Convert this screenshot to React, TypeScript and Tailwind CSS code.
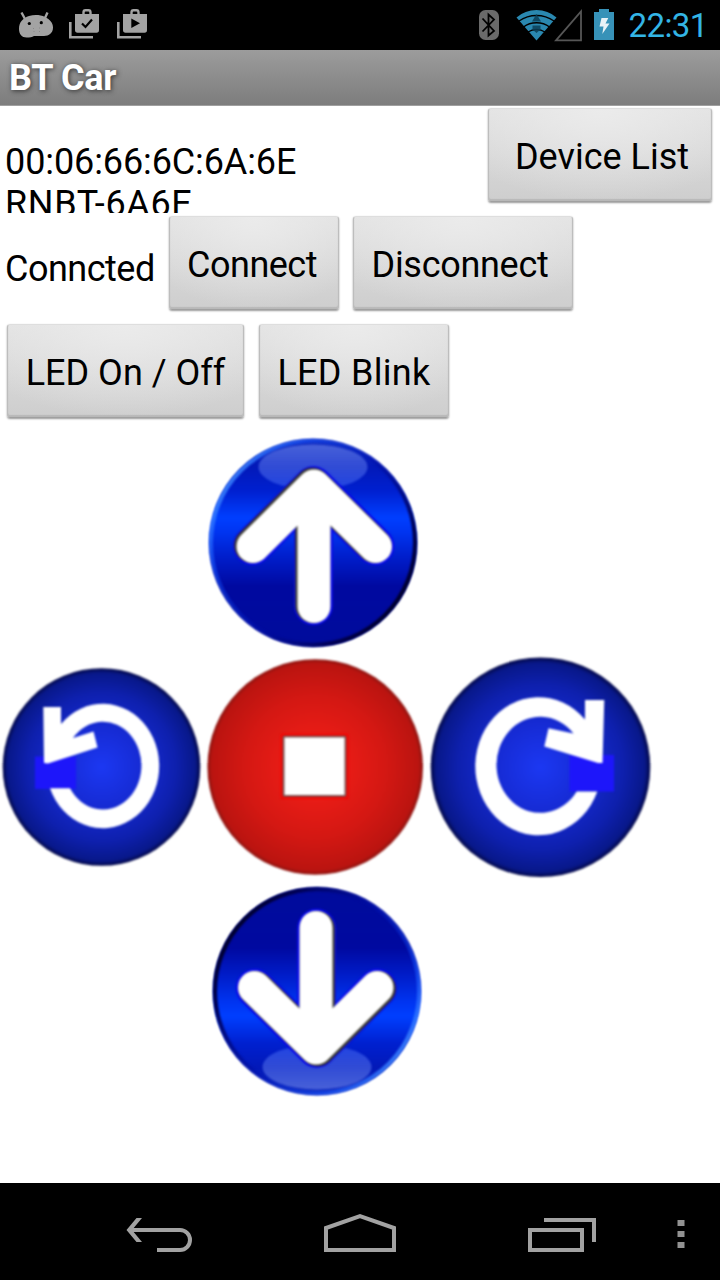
import React from "react";

function AndroidIcon() {
  return (
    <svg className="h-[50px] w-[40px]" viewBox="16 0 40 50">
      <path d="M21.500 12.500L25 19M47.500 12.500L44.500 19" stroke="#a3a3a3" strokeWidth="2.400" strokeLinecap="butt" />
      <path d="M19 29C19 22 23 18 29 16C34 14.500 40 14.500 45 17C50 19.500 53 23 53 27.500C53 33 49 36 44 36H34C32 37 30 37.500 26.500 37.500C22 37.500 19 34 19 29Z" fill="#a3a3a3" />
      <circle cx="29.300" cy="23.500" r="1.600" fill="#000" />
      <circle cx="41.300" cy="22.700" r="1.600" fill="#000" />
      <path d="M33 28.500h1M39 28h1M33.500 31.500h1M39 31.500h1" stroke="#888" strokeWidth="1" />
    </svg>
  );
}

function BagIcon({ kind }: { kind: "check" | "play" }) {
  return (
    <svg className="h-[50px] w-[48px]" viewBox="60 0 48 50">
      <path d="M70.300 22V37.300H93" fill="none" stroke="#a3a3a3" strokeWidth="2.600" />
      <path d="M83.500 15V12.500Q83.500 10.300 85.500 10.300H88.500Q90.500 10.300 90.500 12.500V15" fill="none" stroke="#a3a3a3" strokeWidth="2.400" />
      <path d="M75 14H99V30Q99 32.700 96.500 32.700H77.500Q75 32.700 75 30Z" fill="#a3a3a3" />
      {kind === "check" ? (
        <path d="M82 23.500L85.500 27L92 19.500" fill="none" stroke="#000" strokeWidth="2.200" />
      ) : (
        <path d="M83.300 18.500V28L92 23.300Z" fill="#000" />
      )}
    </svg>
  );
}

function StatusBar() {
  return (
    <header className="flex h-[50px] items-center bg-black">
      <div className="flex w-[476px] pl-4">
        <AndroidIcon />
        <div className="flex pl-1">
          <BagIcon kind="check" />
          <BagIcon kind="play" />
        </div>
      </div>
      <svg className="h-[50px] w-[30px]" viewBox="476 0 30 50">
        <rect x="479" y="10" width="20" height="30" rx="6.500" fill="#6a6a6a" />
        <path d="M482.500 18.500L494 31L488.500 35.500V14.500L494 19.500L482.500 31.500" fill="none" stroke="#000" strokeWidth="1.800" />
      </svg>
      <svg className="h-[50px] w-[112px]" viewBox="506 0 112 50">
        <path d="M516.500 17.500Q525 10 536.500 10T556.500 17.500L536.500 40.500Z" fill="#2a88b0" />
        <path d="M519 21Q527 15.500 536.500 15.500T554 21M523.500 27Q529 22.800 536.500 22.800T549.500 27M528 32Q532 29.500 536.500 29.500T545 32" fill="none" stroke="#000" strokeWidth="1.400" />
        <path d="M536.500 14L541 21.500H532ZM532.500 25.500H540.500V29.500L536.500 33L532.500 29.500Z" fill="#0b4058" opacity=".85" />
        <path d="M556 40.300L581 11.500V40.300Z" fill="none" stroke="#565656" strokeWidth="1.800" />
        <path d="M594 12H599V9H609V12H614V40H594Z" fill="#3792b8" />
        <path d="M601.500 18H608.300L605.500 23.500H609.500L602.300 34L603.500 26.500H599.500Z" fill="#e8f2f7" />
      </svg>
      <span className="ml-[10.500px] pt-[2px] text-[33px] leading-[50px] tracking-[-0.6px] whitespace-nowrap text-[#33b5e5]">22:31</span>
    </header>
  );
}

function AndroidButton({ children, className }: { children: React.ReactNode; className: string }) {
  return (
    <button
      className={`h-[94px] shrink-0 rounded-[3px] border border-t-[#dedede] border-r-[#bdbdbd] border-b-[#a0a0a0] border-l-[#bdbdbd] bg-[radial-gradient(ellipse_75%_100%_at_50%_0%,#ebebeb_0%,transparent_100%),linear-gradient(#e1e1e1,#cecece)] pt-[4px] text-center whitespace-nowrap shadow-[0_1px_2px_rgba(0,0,0,0.4),inset_0_-2px_1px_#b8b8b8] ${className}`}
    >
      {children}
    </button>
  );
}

function Gradients() {
  return (
    <svg className="absolute h-0 w-0">
      <defs>
        <linearGradient id="gloss" x1="0" y1="0" x2="0" y2="1">
          <stop offset="0" stopColor="#1430c4" />
          <stop offset=".13" stopColor="#0319b8" />
          <stop offset=".25" stopColor="#0020d0" />
          <stop offset=".38" stopColor="#003fff" />
          <stop offset=".45" stopColor="#0034f0" />
          <stop offset=".58" stopColor="#001cc8" />
          <stop offset=".71" stopColor="#0009a0" />
          <stop offset="1" stopColor="#000c9c" />
        </linearGradient>
        <linearGradient id="rim" x1="0" y1=".15" x2="1" y2=".85">
          <stop offset="0" stopColor="#50a0ff" />
          <stop offset=".25" stopColor="#1555ff" stopOpacity=".5" />
          <stop offset=".5" stopColor="#0010b0" stopOpacity=".5" />
          <stop offset=".8" stopColor="#000050" />
          <stop offset="1" stopColor="#000010" />
        </linearGradient>
        <linearGradient id="shine" x1="0" y1="0" x2="0" y2="1">
          <stop offset="0" stopColor="#8098f0" stopOpacity=".5" />
          <stop offset="1" stopColor="#5078ff" stopOpacity=".42" />
        </linearGradient>
        <radialGradient id="blue">
          <stop offset="0" stopColor="#1c38f2" />
          <stop offset=".4" stopColor="#162bd4" />
          <stop offset=".75" stopColor="#0e20ae" />
          <stop offset=".95" stopColor="#08188a" />
          <stop offset="1" stopColor="#030848" />
        </radialGradient>
        <radialGradient id="red">
          <stop offset="0" stopColor="#f02019" />
          <stop offset=".3" stopColor="#e81c16" />
          <stop offset=".65" stopColor="#d41813" />
          <stop offset=".96" stopColor="#ba1410" />
          <stop offset="1" stopColor="#8a1410" />
        </radialGradient>
        <filter id="soft" x="-25%" y="-25%" width="150%" height="150%" colorInterpolationFilters="sRGB">
          <feGaussianBlur stdDeviation="1.1" />
        </filter>
      </defs>
    </svg>
  );
}

function GlossyArrow() {
  const arrow = "M313.500 487V606M252.500 546L313.500 485.500L375 546";
  return (
    <g fill="none" strokeLinecap="round" strokeLinejoin="round">
      <circle cx="313" cy="542.800" r="104" fill="url(#gloss)" filter="url(#soft)" />
      <circle cx="313" cy="542.800" r="102" stroke="url(#rim)" strokeWidth="4" filter="url(#soft)" />
      <ellipse cx="313" cy="467" rx="54.500" ry="22.500" fill="url(#shine)" filter="url(#soft)" />
      <path d={arrow} stroke="#0a0ae8" strokeWidth="38.500" filter="url(#soft)" />
      <path d={arrow} stroke="#3c3c34" strokeWidth="34" transform="translate(-1.300 -.7)" filter="url(#soft)" />
      <path d={arrow} stroke="#fff" strokeWidth="33" transform="translate(.5 .5)" filter="url(#soft)" />
    </g>
  );
}

function UpIcon() {
  return (
    <svg className="col-start-2 h-[224px] w-[224px]" viewBox="204 430 224 224">
      <GlossyArrow />
    </svg>
  );
}

function DownIcon() {
  return (
    <svg className="col-start-2 h-[216px] w-[224px]" viewBox="204 884 224 216">
      <g transform="rotate(180 315 767)">
        <GlossyArrow />
      </g>
    </svg>
  );
}

function LeftIcon() {
  return (
    <svg className="h-[230px] w-[204px]" viewBox="0 654 204 230">
      <circle cx="101.500" cy="767" r="98.800" fill="url(#blue)" filter="url(#soft)" />
      <rect x="35" y="756.500" width="41" height="32.500" fill="#1d16fa" filter="url(#soft)" />
      <path d="M61 724A56.500 62.200 0 1 1 50 788.300H70A38.500 43.800 0 1 0 73 738L93.500 731.500L97.500 747.500L48 763.500L44 763L43.300 707H61Z" fill="#fff" filter="url(#soft)" />
    </svg>
  );
}

function StopIcon() {
  return (
    <svg className="h-[230px] w-[224px]" viewBox="204 654 224 230">
      <circle cx="315.200" cy="767" r="107.800" fill="url(#red)" filter="url(#soft)" />
      <rect x="280.500" y="733.500" width="68" height="65.500" rx="2" fill="#f00806" filter="url(#soft)" />
      <rect x="282.700" y="735.700" width="63.600" height="61" rx="1.500" fill="#7c5050" filter="url(#soft)" />
      <rect x="284.500" y="737.500" width="60" height="57.500" fill="#fff" filter="url(#soft)" />
    </svg>
  );
}

function RightIcon() {
  return (
    <svg className="h-[230px] w-[230px]" viewBox="428 654 230 230">
      <circle cx="540.500" cy="767.300" r="109.800" fill="url(#blue)" filter="url(#soft)" />
      <rect x="569.500" y="755" width="44.500" height="36.500" fill="#1d16fa" filter="url(#soft)" />
      <path d="M585 719.500A63.200 69 0 1 0 597.300 791.500H576.700A43.800 48 0 1 1 573.500 733.500L548.500 728.300L544.300 746.500L598 763L602.500 763L604.300 700H585Z" fill="#fff" filter="url(#soft)" />
    </svg>
  );
}

function NavBar() {
  return (
    <nav className="h-[97px] bg-black">
      <div className="flex h-full">
        <svg className="h-[97px] w-[240px]" viewBox="0 1183 240 97" fill="none" stroke="#a2a2a2" strokeWidth="4">
          <path d="M157 1250H180A10 10 0 0 0 180 1230H130" />
          <path d="M136.500 1218H142L132 1230L142 1242H136.500L126.500 1230Z" fill="#a2a2a2" stroke="none" />
        </svg>
        <svg className="h-[97px] w-[240px]" viewBox="240 1183 240 97" fill="none" stroke="#a2a2a2" strokeWidth="4">
          <path d="M326 1250V1228L360 1216L394 1228V1250Z" />
        </svg>
        <svg className="h-[97px] w-[180px]" viewBox="480 1183 180 97" fill="none" stroke="#a2a2a2" strokeWidth="4">
          <path d="M530 1230H582V1250H530ZM544 1220H594V1242" />
        </svg>
        <svg className="h-[97px] w-[60px]" viewBox="660 1183 60 97">
          <path d="M677.500 1220h7v6h-7ZM677.500 1231h7v6h-7ZM677.500 1242h7v6h-7Z" fill="#929292" />
        </svg>
      </div>
    </nav>
  );
}

export default function App() {
  return (
    <div className="flex h-[1280px] w-[720px] flex-col overflow-hidden bg-white font-['Roboto',sans-serif] text-[36px] leading-[42px] text-black">
      <StatusBar />
      <div className="flex h-[56px] shrink-0 items-center border-b border-[#a0a0a0] bg-linear-to-b from-[#9c9c9c] to-[#7d7d7d] pt-px pl-[9px] text-[36px] font-bold tracking-[-0.3px] text-white [text-shadow:1px_1px_5px_#333]">
        BT Car
      </div>
      <main className="flex-1">
        <Gradients />
        <section className="flex h-[108px] pt-[2px]">
          <div className="h-[105px] w-[488px] overflow-hidden pt-[33px] pl-[5px]">
            <p className="tracking-[-0.1px]">00:06:66:6C:6A:6E</p>
            <p className="tracking-[0.65px]">RNBT-6A6E</p>
          </div>
          <AndroidButton className="w-[224px] pl-1">Device List</AndroidButton>
        </section>
        <section className="flex h-[108px] pt-[2px]">
          <span className="w-[169px] pt-[32px] pl-[5px] tracking-[-0.5px]">Conncted</span>
          <AndroidButton className="w-[170px] pr-[4px] tracking-[-0.5px]">Connect</AndroidButton>
          <AndroidButton className="ml-[14px] w-[220px] pr-[6px] tracking-[-0.3px]">Disconnect</AndroidButton>
        </section>
        <section className="flex h-[108px] pt-[2px] pl-[7px]">
          <AndroidButton className="w-[237px]">LED On / Off</AndroidButton>
          <AndroidButton className="ml-[15px] w-[190px] tracking-[0.3px]">LED Blink</AndroidButton>
        </section>
        <section className="grid grid-cols-[204px_224px_230px]">
          <UpIcon />
          <div className="col-span-3 flex">
            <LeftIcon />
            <StopIcon />
            <RightIcon />
          </div>
          <DownIcon />
        </section>
      </main>
      <NavBar />
    </div>
  );
}
